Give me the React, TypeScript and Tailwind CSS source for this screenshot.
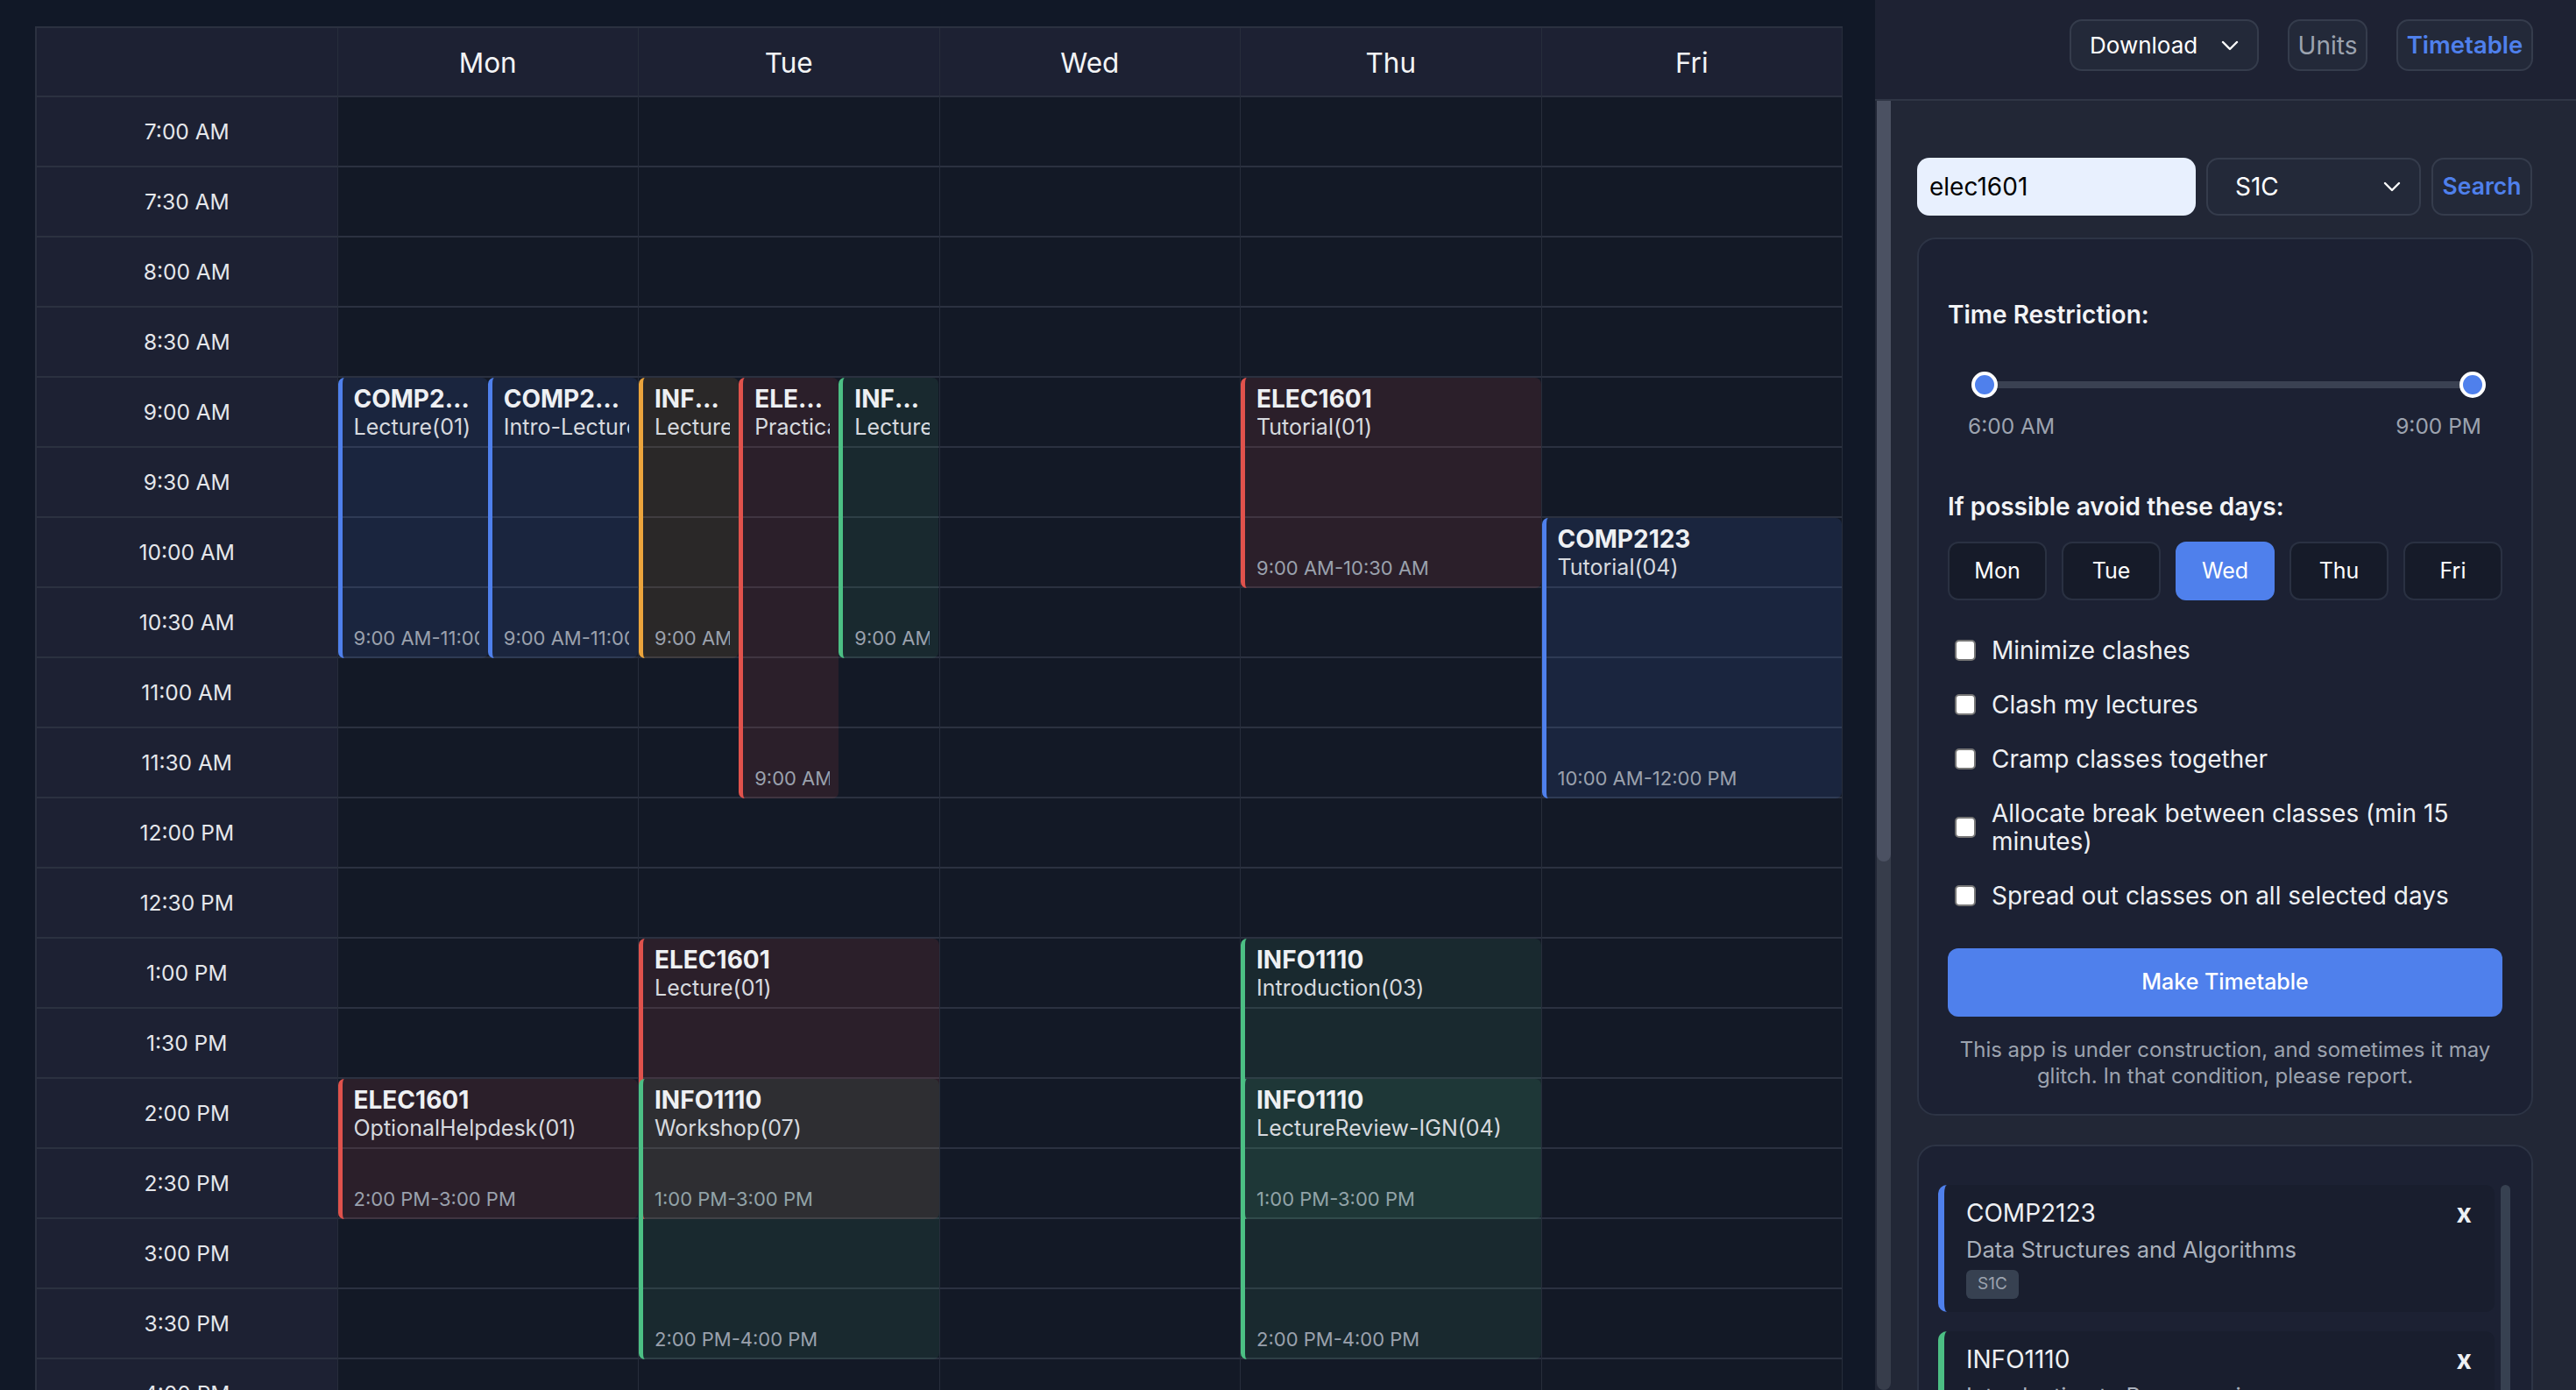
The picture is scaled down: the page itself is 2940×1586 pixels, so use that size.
import React from 'react'

type Tone = 'blue' | 'red' | 'green' | 'orange'

interface ClassEvent {
  code: string
  kind: string
  start: number
  end: number
  tone: Tone
  col?: number
  cols?: number
}

const ROW = 80
const FIRST_HOUR = 7

const toneClass: Record<Tone, string> = {
  blue: 'border-[#4f80ec] bg-[#4f80ec1f]',
  red: 'border-[#e0524c] bg-[#e0524c1f]',
  green: 'border-[#4cbf84] bg-[#4cbf841a]',
  orange: 'border-[#eba43c] bg-[#eba43c1c]',
}

const days = ['Mon', 'Tue', 'Wed', 'Thu', 'Fri']

const events: Record<string, ClassEvent[]> = {
  Mon: [
    { code: 'COMP2123', kind: 'Lecture(01)', start: 9, end: 11, tone: 'blue', col: 0, cols: 2 },
    { code: 'COMP2123', kind: 'Intro-Lecture(01)', start: 9, end: 11, tone: 'blue', col: 1, cols: 2 },
    { code: 'ELEC1601', kind: 'OptionalHelpdesk(01)', start: 14, end: 15, tone: 'red' },
  ],
  Tue: [
    { code: 'INFO1112', kind: 'Lecture(01)', start: 9, end: 11, tone: 'orange', col: 0, cols: 3 },
    { code: 'ELEC1601', kind: 'Practical(01)', start: 9, end: 12, tone: 'red', col: 1, cols: 3 },
    { code: 'INFO1110', kind: 'Lecture(01)', start: 9, end: 11, tone: 'green', col: 2, cols: 3 },
    { code: 'ELEC1601', kind: 'Lecture(01)', start: 13, end: 15, tone: 'red' },
    { code: 'INFO1110', kind: 'Workshop(07)', start: 14, end: 16, tone: 'green' },
  ],
  Wed: [],
  Thu: [
    { code: 'ELEC1601', kind: 'Tutorial(01)', start: 9, end: 10.5, tone: 'red' },
    { code: 'INFO1110', kind: 'Introduction(03)', start: 13, end: 15, tone: 'green' },
    { code: 'INFO1110', kind: 'LectureReview-IGN(04)', start: 14, end: 16, tone: 'green' },
  ],
  Fri: [{ code: 'COMP2123', kind: 'Tutorial(04)', start: 10, end: 12, tone: 'blue' }],
}

const fmt = (t: number) => {
  const h = Math.floor(t)
  const m = t - h >= 0.5 ? '30' : '00'
  const suffix = h >= 12 ? 'PM' : 'AM'
  const h12 = h > 12 ? h - 12 : h
  return `${h12}:${m} ${suffix}`
}

const slots: number[] = []
for (let t = FIRST_HOUR; t < 21; t += 0.5) slots.push(t)

const Chevron = () => (
  <svg width="20" height="12" viewBox="0 0 20 12" fill="none">
    <polyline points="2,2 10,10 18,2" stroke="currentColor" strokeWidth="2.4" strokeLinecap="round" strokeLinejoin="round" />
  </svg>
)

const EventBlock = ({ ev }: { ev: ClassEvent }) => {
  const col = ev.col ?? 0
  const cols = ev.cols ?? 1
  return (
    <div
      className={`absolute flex flex-col justify-between overflow-hidden rounded-[7px] border-l-[5px] pb-[8px] pl-[13px] pr-[10px] pt-[8px] ${toneClass[ev.tone]}`}
      style={{
        top: (ev.start - FIRST_HOUR) * 2 * ROW,
        height: (ev.end - ev.start) * 2 * ROW,
        left: `${(col / cols) * 100}%`,
        width: `${100 / cols}%`,
      }}
    >
      <div className="min-w-0">
        <div className="truncate text-[28px] font-bold leading-[32px] text-[#eef0f3]">{ev.code}</div>
        <div className="overflow-hidden whitespace-nowrap text-[25px] leading-[33px] text-[#d6d9de]">{ev.kind}</div>
      </div>
      <div className="overflow-hidden whitespace-nowrap text-[22px] leading-[30px] text-[#9aa1ad]">
        {fmt(ev.start)}-{fmt(ev.end)}
      </div>
    </div>
  )
}

const Timetable = () => {
  return (
    <div className="grid w-[2063px] grid-cols-6 border-l-2 border-t-2 border-[#2b3140]">
      <div className="flex flex-col border-r border-[#272d3b]">
        <div className="h-[79px] shrink-0 border-b-2 border-[#2b3140] bg-[#1d2133]" />
        {slots.map((t) => (
          <div
            key={t}
            className="flex h-[80px] shrink-0 items-center justify-center border-b-2 border-[#2b3140] bg-[#1d2133] text-[24.5px] text-[#e5e7eb]"
          >
            {fmt(t)}
          </div>
        ))}
      </div>
      {days.map((day) => (
        <div key={day} className="flex flex-col border-r border-[#272d3b]">
          <div className="flex h-[79px] shrink-0 items-center justify-center border-b-2 border-[#2b3140] bg-[#1d2133] pt-[2px] text-[31.5px] text-[#f3f4f6]">
            {day}
          </div>
          <div className="relative">
            {slots.map((t) => (
              <div key={t} className="h-[80px] border-b-2 border-[#2b3140] bg-[#131926]" />
            ))}
            {events[day].map((ev, i) => (
              <EventBlock key={i} ev={ev} />
            ))}
          </div>
        </div>
      ))}
    </div>
  )
}

const checks = [
  'Minimize clashes',
  'Clash my lectures',
  'Cramp classes together',
  'Allocate break between classes (min 15 minutes)',
  'Spread out classes on all selected days',
]

const units = [
  { code: 'COMP2123', name: 'Data Structures and Algorithms', border: 'border-[#4f80ec]' },
  { code: 'INFO1110', name: 'Introduction to Programming', border: 'border-[#4cbf84]' },
]

const Sidebar = () => {
  return (
    <aside className="flex w-[800px] shrink-0 flex-col bg-[#222736]">
      <header className="flex h-[115px] shrink-0 items-start justify-end gap-[33px] border-b-2 border-[#2f3545] bg-[#1e2233] pr-[49px] pt-[22px]">
        <button className="flex h-[59px] w-[216px] items-center justify-between rounded-[14px] border-2 border-[#353c4c] bg-[#232939] pl-[21px] pr-[21px] text-[26px] text-white">
          Download
          <Chevron />
        </button>
        <button className="h-[59px] w-[91px] rounded-[14px] border-2 border-[#353c4c] bg-[#232939] text-[28px] text-[#9ca3af]">
          Units
        </button>
        <button className="h-[59px] w-[156px] rounded-[14px] border-2 border-[#353c4c] bg-[#232939] text-[27.5px] font-semibold text-[#4f80ec]">
          Timetable
        </button>
      </header>

      <div className="flex min-h-0 flex-1">
        <div className="ml-[2px] flex w-[16px] shrink-0 flex-col rounded-b-full bg-[#373d4b]">
          <div className="h-[868px] rounded-b-full bg-[#4b5162]" />
        </div>

        <div className="flex-1 overflow-hidden pl-[30px] pr-[49px] pt-[65px]">
          <div className="flex gap-[12px]">
            <input
              defaultValue="elec1601"
              className="h-[66px] w-[318px] rounded-[14px] bg-[#e8f0fe] pl-[14px] text-[28px] text-black outline-none"
            />
            <div className="flex h-[66px] w-[245px] items-center justify-between rounded-[14px] border-2 border-[#353c4c] bg-[#232939] pl-[31px] pr-[21px] text-[28px] text-white">
              S1C
              <Chevron />
            </div>
            <button className="h-[66px] w-[115px] rounded-[14px] border-2 border-[#353c4c] bg-[#232939] text-[26.5px] font-semibold text-[#4f80ec]">
              Search
            </button>
          </div>

          <div className="mt-[25px] rounded-[21px] border-2 border-[#2d3445] bg-[#1c2133] px-[33px] pb-[28px] pt-[68px]">
            <div className="text-[28px] font-semibold leading-[36px] text-[#f3f4f6]">Time Restriction:</div>

            <div className="relative ml-[27px] mr-[19px] mt-[47px] h-[30px]">
              <div className="absolute inset-x-0 top-[11px] h-[8px] rounded-full bg-[#3a4152]" />
              <div className="absolute left-0 top-0 h-[30px] w-[30px] rounded-full border-4 border-white bg-[#4f80ec]" />
              <div className="absolute right-0 top-0 h-[30px] w-[30px] rounded-full border-4 border-white bg-[#4f80ec]" />
            </div>
            <div className="ml-[23px] mr-[24px] mt-[17px] flex justify-between text-[24.5px] leading-[30px] text-[#9ca3af]">
              <span>6:00 AM</span>
              <span>9:00 PM</span>
            </div>

            <div className="mt-[59px] text-[28px] font-semibold leading-[36px] text-[#f3f4f6]">
              If possible avoid these days:
            </div>
            <div className="mt-[22px] grid grid-cols-5 gap-[17px]">
              {days.map((d) => (
                <div
                  key={d}
                  className={
                    d === 'Wed'
                      ? 'flex h-[67px] items-center justify-center rounded-[12px] border-2 border-[#4f80ec] bg-[#4f80ec] text-[25px] text-white'
                      : 'flex h-[67px] items-center justify-center rounded-[12px] border-2 border-[#2a3142] bg-[#161b29] text-[25px] text-white'
                  }
                >
                  {d}
                </div>
              ))}
            </div>

            <div className="mt-[41px] flex flex-col gap-[30px]">
              {checks.map((c) => (
                <label key={c} className="flex items-center gap-[18px] pl-[8px]">
                  <span className="h-[24px] w-[24px] shrink-0 rounded-[5px] border-2 border-[#767676] bg-white" />
                  <span className="text-[28px] leading-[32px] text-[#eef0f3]">{c}</span>
                </label>
              ))}
            </div>

            <button className="mt-[44px] h-[78px] w-full rounded-[12px] bg-[#4f80ec] text-[25px] font-medium text-white">
              Make Timetable
            </button>
            <p className="mt-[23px] text-center text-[24px] leading-[30px] text-[#9ca3af]">
              This app is under construction, and sometimes it may glitch. In that condition, please report.
            </p>
          </div>

          <div className="mt-[33px] rounded-[21px] border-2 border-[#2d3445] bg-[#1c2133] pl-[22px] pr-[24px] pt-[44px]">
            <div className="flex gap-[7px]">
              <div className="flex flex-1 flex-col gap-[22px]">
                {units.map((u) => (
                  <div key={u.code} className={`rounded-[10px] border-l-[7px] ${u.border} bg-[#191e2e] pb-[15px] pl-[25px] pr-[26px] pt-[14px]`}>
                    <div className="flex items-center justify-between">
                      <span className="text-[28px] leading-[36px] text-[#eef0f3]">{u.code}</span>
                      <span className="text-[30px] font-bold leading-[36px] text-[#eef0f3]">x</span>
                    </div>
                    <div className="mt-[6px] text-[25.5px] leading-[36px] text-[#a9b0bb]">{u.name}</div>
                    <div className="mt-[5px] flex h-[33px] w-[60px] items-center justify-center rounded-[6px] bg-[#374151] text-[19px] text-[#9ca3af]">
                      S1C
                    </div>
                  </div>
                ))}
              </div>
              <div className="w-[11px] shrink-0 rounded-full bg-[#374151]" />
            </div>
          </div>
        </div>
      </div>
    </aside>
  )
}

export default function App() {
  return (
    <div className="flex h-screen w-screen overflow-hidden bg-[#111827] font-['Inter',sans-serif]">
      <main className="min-w-0 flex-1 overflow-hidden pl-[40px] pt-[30px]">
        <Timetable />
      </main>
      <Sidebar />
    </div>
  )
}
